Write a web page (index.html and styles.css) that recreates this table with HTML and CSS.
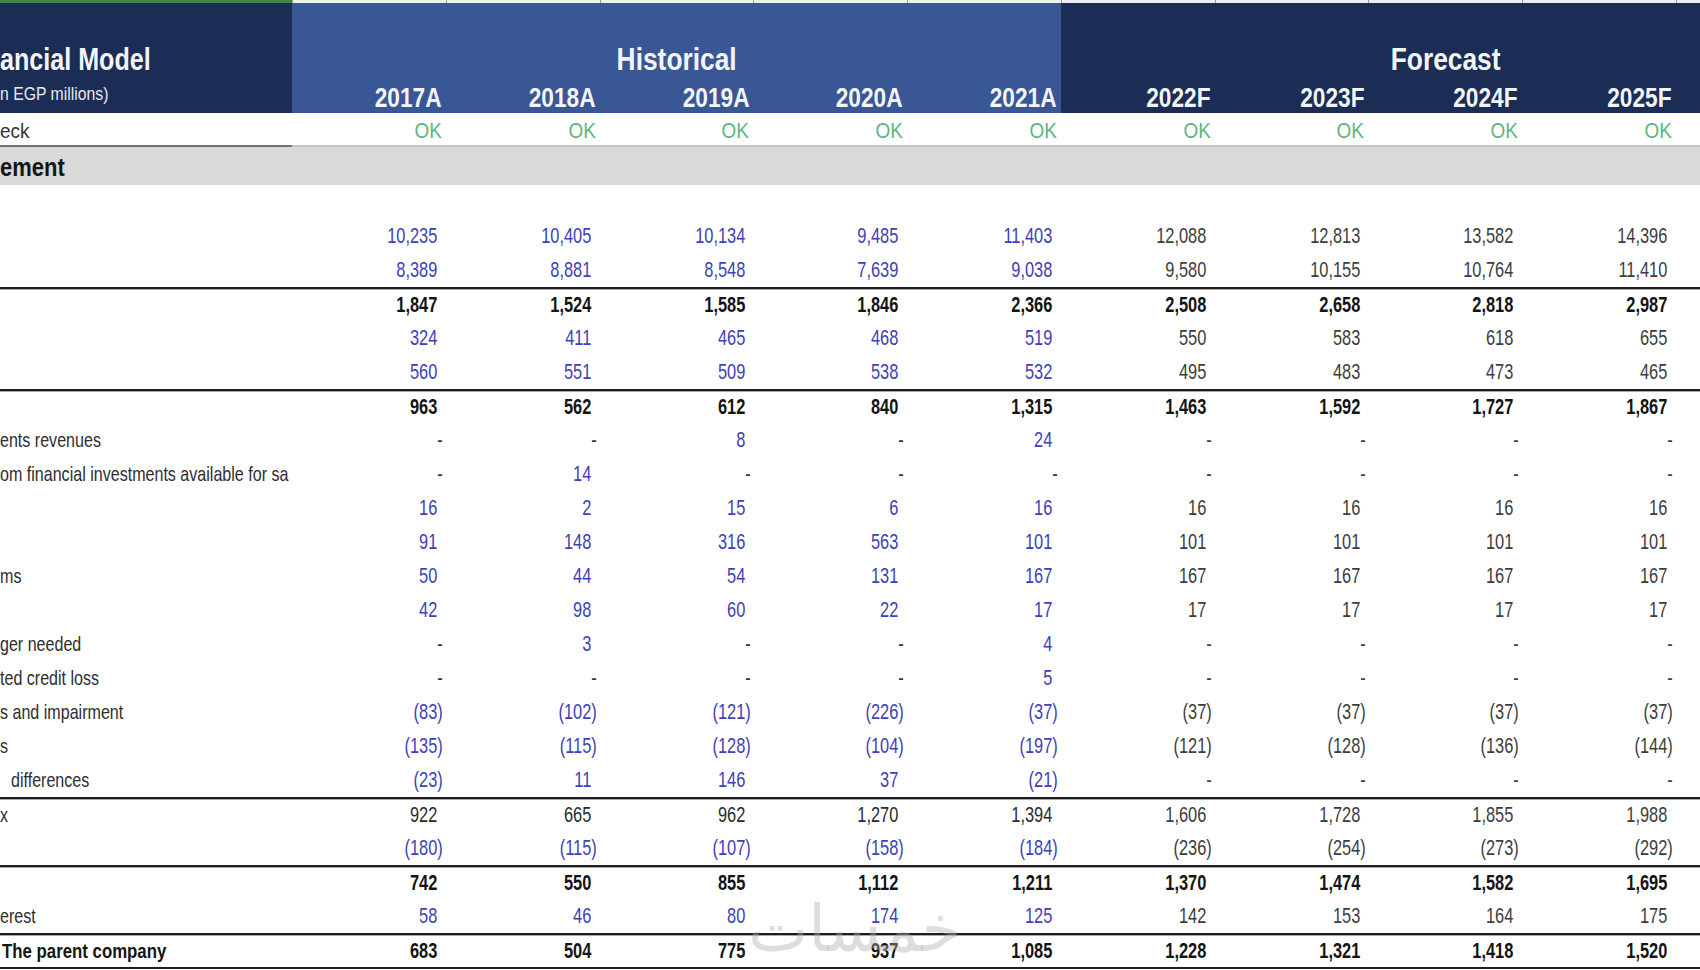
FILE: index.html
```html
<!DOCTYPE html>
<html lang="en">
<head>
<meta charset="utf-8">
<title>Financial Model</title>
<link rel="stylesheet" href="styles.css">
</head>
<body>
<div class="sheet">
  <div class="grid strip">
    <div class="g"></div><div class="s"></div><div class="s"></div><div class="s"></div><div class="s"></div><div class="s"></div><div class="s"></div><div class="s"></div><div class="s"></div><div class="s"></div><div class="s"></div>
  </div>
  <div class="grid head">
    <div class="h-title"><div class="t1"><span class="x">ancial Model</span></div><div class="t2"><span class="x">n EGP millions)</span></div></div>
    <div class="grp hist"><span class="x">Historical</span></div>
    <div class="grp fc"><span class="x">Forecast</span></div>
    <div class="yr hist"><span class="x">2017A</span></div><div class="yr hist"><span class="x">2018A</span></div><div class="yr hist"><span class="x">2019A</span></div><div class="yr hist"><span class="x">2020A</span></div><div class="yr hist"><span class="x">2021A</span></div>
    <div class="yr"><span class="x">2022F</span></div><div class="yr"><span class="x">2023F</span></div><div class="yr"><span class="x">2024F</span></div><div class="yr"><span class="x">2025F</span></div><div class="yr"></div>
  </div>
  <div class="grid check">
    <div class="lbl"><span class="x">eck</span></div>
    <div class="ok"><span class="x">OK</span></div><div class="ok"><span class="x">OK</span></div><div class="ok"><span class="x">OK</span></div><div class="ok"><span class="x">OK</span></div><div class="ok"><span class="x">OK</span></div><div class="ok"><span class="x">OK</span></div><div class="ok"><span class="x">OK</span></div><div class="ok"><span class="x">OK</span></div><div class="ok"><span class="x">OK</span></div><div class="ok"></div>
  </div>
  <div class="band"><span class="x">ement</span></div>

  <div class="grid row"><div class="lbl"></div></div>
  <div class="grid row">
    <div class="lbl"></div>
    <div class="n in">10,235</div><div class="n in">10,405</div><div class="n in">10,134</div><div class="n in">9,485</div><div class="n in">11,403</div>
    <div class="n fc">12,088</div><div class="n fc">12,813</div><div class="n fc">13,582</div><div class="n fc">14,396</div>
  </div>
  <div class="grid row">
    <div class="lbl"></div>
    <div class="n in">8,389</div><div class="n in">8,881</div><div class="n in">8,548</div><div class="n in">7,639</div><div class="n in">9,038</div>
    <div class="n fc">9,580</div><div class="n fc">10,155</div><div class="n fc">10,764</div><div class="n fc">11,410</div>
  </div>
  <div class="grid row rule bold">
    <div class="lbl"></div>
    <div class="n">1,847</div><div class="n">1,524</div><div class="n">1,585</div><div class="n">1,846</div><div class="n">2,366</div>
    <div class="n">2,508</div><div class="n">2,658</div><div class="n">2,818</div><div class="n">2,987</div>
  </div>
  <div class="grid row">
    <div class="lbl"></div>
    <div class="n in">324</div><div class="n in">411</div><div class="n in">465</div><div class="n in">468</div><div class="n in">519</div>
    <div class="n fc">550</div><div class="n fc">583</div><div class="n fc">618</div><div class="n fc">655</div>
  </div>
  <div class="grid row">
    <div class="lbl"></div>
    <div class="n in">560</div><div class="n in">551</div><div class="n in">509</div><div class="n in">538</div><div class="n in">532</div>
    <div class="n fc">495</div><div class="n fc">483</div><div class="n fc">473</div><div class="n fc">465</div>
  </div>
  <div class="grid row rule bold">
    <div class="lbl"></div>
    <div class="n">963</div><div class="n">562</div><div class="n">612</div><div class="n">840</div><div class="n">1,315</div>
    <div class="n">1,463</div><div class="n">1,592</div><div class="n">1,727</div><div class="n">1,867</div>
  </div>
  <div class="grid row">
    <div class="lbl"><span class="x">ents revenues</span></div>
    <div class="n d">-</div><div class="n d">-</div><div class="n in">8</div><div class="n d">-</div><div class="n in">24</div>
    <div class="n d fc">-</div><div class="n d fc">-</div><div class="n d fc">-</div><div class="n d fc">-</div>
  </div>
  <div class="grid row">
    <div class="lbl"><span class="x">om financial investments available for sa</span></div>
    <div class="n d">-</div><div class="n in">14</div><div class="n d">-</div><div class="n d">-</div><div class="n d">-</div>
    <div class="n d fc">-</div><div class="n d fc">-</div><div class="n d fc">-</div><div class="n d fc">-</div>
  </div>
  <div class="grid row">
    <div class="lbl"></div>
    <div class="n in">16</div><div class="n in">2</div><div class="n in">15</div><div class="n in">6</div><div class="n in">16</div>
    <div class="n fc">16</div><div class="n fc">16</div><div class="n fc">16</div><div class="n fc">16</div>
  </div>
  <div class="grid row">
    <div class="lbl"></div>
    <div class="n in">91</div><div class="n in">148</div><div class="n in">316</div><div class="n in">563</div><div class="n in">101</div>
    <div class="n fc">101</div><div class="n fc">101</div><div class="n fc">101</div><div class="n fc">101</div>
  </div>
  <div class="grid row">
    <div class="lbl"><span class="x">ms</span></div>
    <div class="n in">50</div><div class="n in">44</div><div class="n in">54</div><div class="n in">131</div><div class="n in">167</div>
    <div class="n fc">167</div><div class="n fc">167</div><div class="n fc">167</div><div class="n fc">167</div>
  </div>
  <div class="grid row">
    <div class="lbl"></div>
    <div class="n in">42</div><div class="n in">98</div><div class="n in">60</div><div class="n in">22</div><div class="n in">17</div>
    <div class="n fc">17</div><div class="n fc">17</div><div class="n fc">17</div><div class="n fc">17</div>
  </div>
  <div class="grid row">
    <div class="lbl"><span class="x">ger needed</span></div>
    <div class="n d">-</div><div class="n in">3</div><div class="n d">-</div><div class="n d">-</div><div class="n in">4</div>
    <div class="n d fc">-</div><div class="n d fc">-</div><div class="n d fc">-</div><div class="n d fc">-</div>
  </div>
  <div class="grid row">
    <div class="lbl"><span class="x">ted credit loss</span></div>
    <div class="n d">-</div><div class="n d">-</div><div class="n d">-</div><div class="n d">-</div><div class="n in">5</div>
    <div class="n d fc">-</div><div class="n d fc">-</div><div class="n d fc">-</div><div class="n d fc">-</div>
  </div>
  <div class="grid row">
    <div class="lbl"><span class="x">s and impairment</span></div>
    <div class="n in neg">(83)</div><div class="n in neg">(102)</div><div class="n in neg">(121)</div><div class="n in neg">(226)</div><div class="n in neg">(37)</div>
    <div class="n fc neg">(37)</div><div class="n fc neg">(37)</div><div class="n fc neg">(37)</div><div class="n fc neg">(37)</div>
  </div>
  <div class="grid row">
    <div class="lbl"><span class="x">s</span></div>
    <div class="n in neg">(135)</div><div class="n in neg">(115)</div><div class="n in neg">(128)</div><div class="n in neg">(104)</div><div class="n in neg">(197)</div>
    <div class="n fc neg">(121)</div><div class="n fc neg">(128)</div><div class="n fc neg">(136)</div><div class="n fc neg">(144)</div>
  </div>
  <div class="grid row">
    <div class="lbl ind"><span class="x">differences</span></div>
    <div class="n in neg">(23)</div><div class="n in">11</div><div class="n in">146</div><div class="n in">37</div><div class="n in neg">(21)</div>
    <div class="n d fc">-</div><div class="n d fc">-</div><div class="n d fc">-</div><div class="n d fc">-</div>
  </div>
  <div class="grid row rule">
    <div class="lbl"><span class="x">x</span></div>
    <div class="n">922</div><div class="n">665</div><div class="n">962</div><div class="n">1,270</div><div class="n">1,394</div>
    <div class="n fc">1,606</div><div class="n fc">1,728</div><div class="n fc">1,855</div><div class="n fc">1,988</div>
  </div>
  <div class="grid row">
    <div class="lbl"></div>
    <div class="n in neg">(180)</div><div class="n in neg">(115)</div><div class="n in neg">(107)</div><div class="n in neg">(158)</div><div class="n in neg">(184)</div>
    <div class="n fc neg">(236)</div><div class="n fc neg">(254)</div><div class="n fc neg">(273)</div><div class="n fc neg">(292)</div>
  </div>
  <div class="grid row rule bold">
    <div class="lbl"></div>
    <div class="n">742</div><div class="n">550</div><div class="n">855</div><div class="n">1,112</div><div class="n">1,211</div>
    <div class="n">1,370</div><div class="n">1,474</div><div class="n">1,582</div><div class="n">1,695</div>
  </div>
  <div class="grid row">
    <div class="lbl"><span class="x">erest</span></div>
    <div class="n in">58</div><div class="n in">46</div><div class="n in">80</div><div class="n in">174</div><div class="n in">125</div>
    <div class="n fc">142</div><div class="n fc">153</div><div class="n fc">164</div><div class="n fc">175</div>
  </div>
  <div class="grid row rule bold last">
    <div class="lbl strong"><span class="x">The parent company</span></div>
    <div class="n">683</div><div class="n">504</div><div class="n">775</div><div class="n">937</div><div class="n">1,085</div>
    <div class="n">1,228</div><div class="n">1,321</div><div class="n">1,418</div><div class="n">1,520</div>
  </div>
</div>
<div class="wm" dir="rtl">خمسات</div>
</body>
</html>
```

FILE: styles.css
```css
* { box-sizing: border-box; margin: 0; padding: 0; }
html, body { width: 1700px; height: 970px; overflow: hidden; background: #fff; }
body {
  position: relative;
  font-family: "Liberation Sans", Arial, sans-serif;
  color: #2e2e2e;
}
.sheet { width: 1830px; }
.grid { display: grid; grid-template-columns: 292px repeat(10, 153.75px); }

/* condensed text (Arial Narrow look) */
.x { display: inline-block; white-space: nowrap; transform-origin: left center; transform: scaleX(var(--sx, 0.78)); }

.strip { height: 3px; }
.strip .g { background: #43844f; }
.strip .s { background: #efefef; border-left: 1px solid #9a9a9a; }

.head {
  height: 110px;
  grid-template-rows: 82px 28px;
  background: #1c2d55;
  color: #f2f4f8;
  font-weight: bold;
}
.h-title { grid-row: 1 / 3; grid-column: 1; padding-top: 41px; white-space: nowrap; overflow: hidden; }
.t1 { font-size: 31px; line-height: 31px; --sx: 0.81; }
.t2 { font-size: 19px; line-height: 19px; font-weight: normal; margin-top: 9px; color: #e6e9f0; --sx: 0.83; }
.grp { grid-row: 1; font-size: 31px; line-height: 31px; padding-top: 41px; text-align: center; --sx: 0.85; }
.grp .x { transform-origin: center center; }
.grp.hist { grid-column: 2 / span 5; background: #3a5795; }
.grp.fc { grid-column: 7 / span 5; }
.yr { grid-row: 2; font-size: 27px; line-height: 27px; text-align: right; padding-right: 4px; --sx: 0.84; }
.yr .x { transform-origin: right center; }
.yr.hist { background: #3a5795; }

.check { height: 34px; }
.check > div { border-bottom: 2px solid #c6c6c6; padding-top: 6px; line-height: 24px; }
.check > .lbl { border-bottom-color: #707070; font-size: 21px; color: #333; --sx: 0.9; }
.ok { font-size: 22px; color: #62b47f; text-align: right; padding-right: 4px; --sx: 0.86; }
.ok .x { transform-origin: right center; }

.band {
  height: 38px;
  background: #d9d9d9;
  font-size: 26px;
  line-height: 38px;
  padding-top: 1px;
  font-weight: bold;
  color: #151515;
  white-space: nowrap;
  --sx: 0.845;
}

.row { height: 34px; align-items: center; }
.row.rule { border-top: 2px solid #1e1e1e; box-shadow: inset 0 1px 0 #a8a8a8; }
.row.last { height: 36px; border-bottom: 2px solid #1e1e1e; }
.lbl { font-size: 21px; line-height: 24px; white-space: nowrap; overflow: hidden; color: #2e2e2e; --sx: 0.765; }
.lbl.ind { padding-left: 11px; }
.lbl.strong { font-weight: bold; color: #151515; padding-left: 2px; --sx: 0.8; }

.n {
  font-size: 22px;
  line-height: 24px;
  text-align: right;
  padding-right: 4px;
  white-space: nowrap;
  color: #2b2b2b;
  transform: scaleX(0.745);
  transform-origin: right center;
}
.n::after { content: ")"; visibility: hidden; }
.n.neg::after, .n.d::after { content: none; }
.n.d { color: #333; }
.n.in { color: #4040b8; }
.n.fc { color: #3d3d3d; }
.bold .n { font-weight: bold; color: #141414; }

.wm {
  position: absolute;
  left: 748px;
  top: 884px;
  font-family: "DejaVu Sans", sans-serif;
  font-size: 64px;
  line-height: 90px;
  color: rgba(175, 175, 175, 0.42);
  pointer-events: none;
}
```
